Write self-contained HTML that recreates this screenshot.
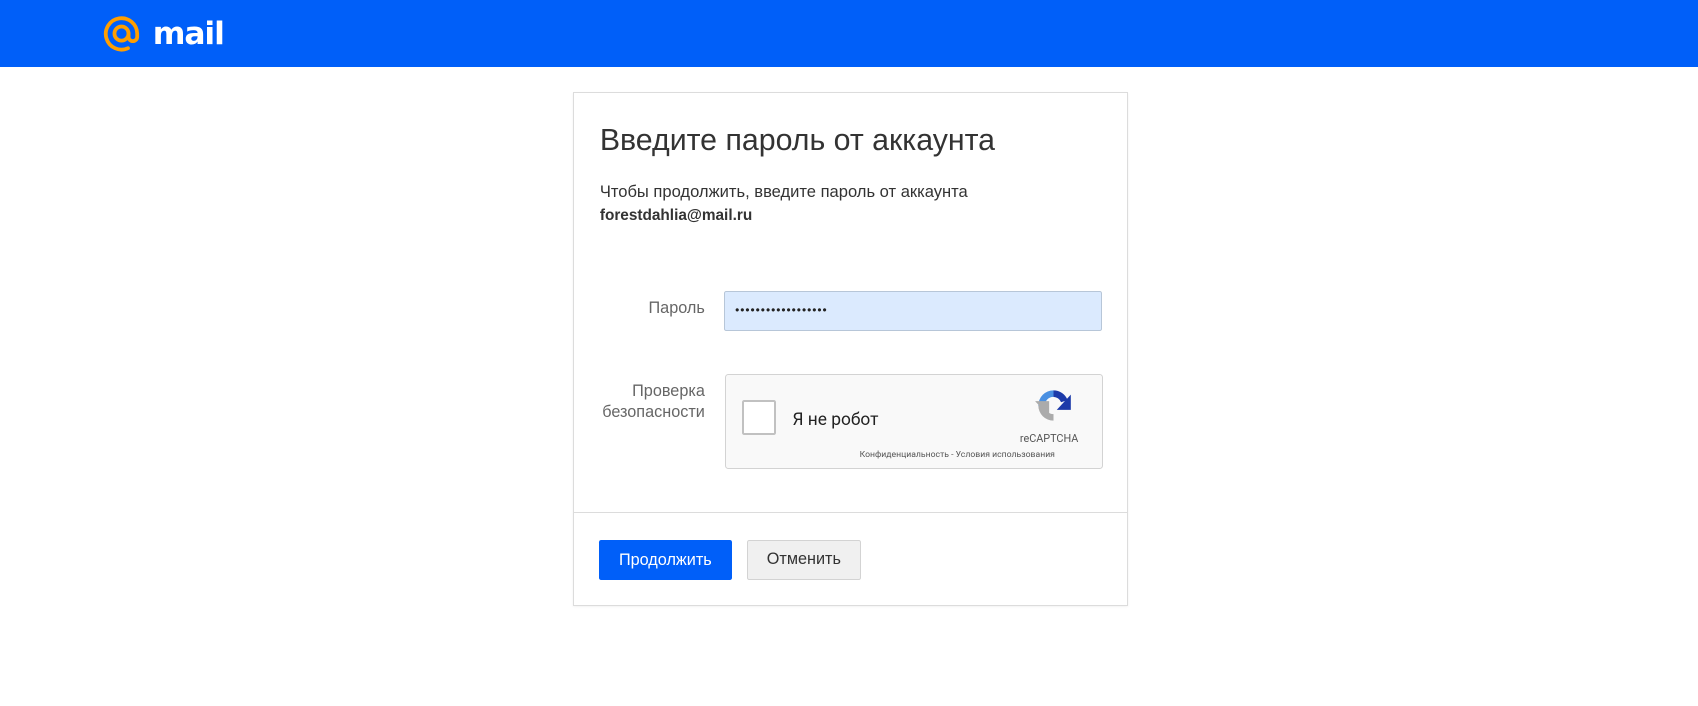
<!DOCTYPE html>
<html style="zoom:1.0829"><head><meta charset="utf-8"><style>
body{margin:0;width:1568px;height:652px;background:#fff;font-family:"Liberation Sans",Arial,sans-serif;position:relative;overflow:hidden}
.top{position:absolute;left:0;top:0;width:1568px;height:62px;background:#005ff9}
.logo{position:absolute;left:94px;top:12px;height:38px}
.card{position:absolute;left:529px;top:85px;width:511px;height:473px;border:1px solid #dcdcdc;box-shadow:0 1px 2px rgba(0,0,0,.06)}
h1{position:absolute;left:24px;top:29px;margin:0;font-weight:normal;font-size:28px;color:#333}
.p{position:absolute;left:24px;top:80px;font-size:15.3px;color:#333;line-height:22px}
.lab{position:absolute;font-size:15px;color:#666;text-align:right;line-height:19px}
.inp{position:absolute;left:139px;top:183px;width:347px;height:35px;background:#dbeafe;border:1px solid #b7c6d8;border-radius:2px;font-size:11px;line-height:35px;text-indent:9px;color:#222;letter-spacing:0.9px}
.cap{position:absolute;left:140px;top:259px;width:347px;height:86px;background:#f9f9f9;border:1px solid #d3d3d3;border-radius:3px;font-family:Roboto,"Liberation Sans",sans-serif}
.cb{position:absolute;left:14px;top:24px;width:28px;height:28px;border:2px solid #c1c1c1;border-radius:2px;background:#fff}
.hr{position:absolute;left:0;top:387px;width:511px;border-top:1px solid #dcdcdc}
.b1{position:absolute;left:23px;top:413px;width:123px;height:37px;background:#005ff9;color:#fff;border-radius:2px;font-size:15px;text-align:center;line-height:37px}
.b2{position:absolute;left:160px;top:413px;width:103px;height:35px;background:#f0f0f0;border:1px solid #d3d3d3;color:#333;border-radius:2px;font-size:15px;text-align:center;line-height:35px}
</style></head><body>
<div class="top"><svg class="logo" width="40" height="38" viewBox="0 0 40 38"><circle cx="18" cy="19" r="6.5" fill="none" stroke="#ff9e00" stroke-width="3.5"/><path d="M24.5 19 v3 a4 4 0 0 0 8 0 v-3 A14.5 14.5 0 1 0 24 32.5" fill="none" stroke="#ff9e00" stroke-width="3.5" stroke-linecap="round"/></svg><div style="position:absolute;left:141px;top:15px;color:#fff;font-size:29px;font-family:'DejaVu Sans',sans-serif;font-weight:bold;letter-spacing:-1px">mail</div></div>
<div class="card">
<h1>Введите пароль от аккаунта</h1>
<div class="p">Чтобы продолжить, введите пароль от аккаунта<br><b style="font-size:14.2px">forestdahlia@mail.ru</b></div>
<div class="lab" style="left:40px;top:189px;width:81px">Пароль</div>
<div class="inp">••••••••••••••••••</div>
<div class="lab" style="left:0px;top:266px;width:121px">Проверка<br>безопасности</div>
<div class="cap"><div class="cb"></div>
<div style="position:absolute;left:61px;top:33px;font-size:16px;color:#222">Я не робот</div>
<svg style="position:absolute;left:284px;top:11px" width="36" height="36" viewBox="0 0 36 36"><path d="M18 4 A14 14 0 0 1 31 13 L25 15 A8 8 0 0 0 18 10Z" fill="#1c3aa9"/><path d="M34 8 L34 22 L21 22Z" fill="#1c3aa9"/><path d="M4 18 A14 14 0 0 1 18 4 L18 10 A8 8 0 0 0 10 18Z" fill="#4a90e2"/><path d="M18 32 A14 14 0 0 1 4 18 L10 18 A8 8 0 0 0 18 26Z" fill="#ababab"/><path d="M2 14 L2 28 L15 28Z" fill="#ababab" transform="rotate(180 8 21)"/></svg>
<div style="position:absolute;left:271px;top:53px;font-size:10px;color:#555">reCAPTCHA</div>
<div style="position:absolute;left:123px;top:70px;font-size:8px;color:#555">Конфиденциальность - Условия использования</div>
</div>
<div class="hr"></div>
<div class="b1">Продолжить</div>
<div class="b2">Отменить</div>
</div>
</body></html>
